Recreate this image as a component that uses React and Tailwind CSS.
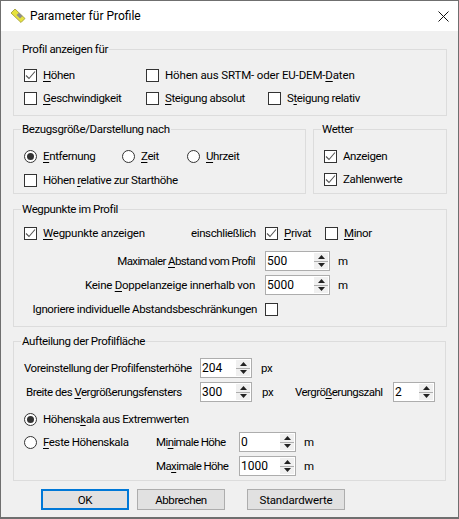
const Key = ({ children }) => <u className="underline underline-offset-2">{children}</u>;

const Check = ({ on, label, className = '' }) => (
  <div className={`flex items-center gap-[6px] ${className}`}>
    <span className="w-[13px] h-[13px] shrink-0 border border-[#333] bg-[#fff] flex items-center justify-center">
      {on && (
        <svg width="11" height="11" viewBox="0 0 11 11" fill="none" stroke="#555" strokeWidth="1.1">
          <path d="M1 5.5 L4 8.5 L10 1.5" />
        </svg>
      )}
    </span>
    {label && <span className="whitespace-nowrap">{label}</span>}
  </div>
);

const Radio = ({ on, label, className = '' }) => (
  <div className={`flex items-center gap-[6px] ${className}`}>
    <span className="w-[13px] h-[13px] shrink-0 rounded-full border border-[#333] bg-[#fff] flex items-center justify-center">
      {on && <span className="w-[7px] h-[7px] rounded-full bg-[#333]" />}
    </span>
    <span className="whitespace-nowrap">{label}</span>
  </div>
);

const Spin = ({ value, className = 'w-[65px]' }) => (
  <div className={`h-[20px] shrink-0 border border-[#adadad] bg-[#fff] flex ${className}`}>
    <span className="flex-1 pl-[1px] text-[12px] tracking-normal leading-[18px] text-[#000]">{value}</span>
    <span className="w-[14px] my-[1px] mr-[1px] flex flex-col gap-[1px] bg-[#adadad]">
      <span className="flex-1 bg-[#f0f0f0] flex items-center justify-center">
        <svg width="7" height="4" viewBox="0 0 7 4"><path d="M3.5 0 L7 4 L0 4 Z" fill="#222" /></svg>
      </span>
      <span className="flex-1 bg-[#f0f0f0] flex items-center justify-center">
        <svg width="7" height="4" viewBox="0 0 7 4"><path d="M0 0 L7 0 L3.5 4 Z" fill="#222" /></svg>
      </span>
    </span>
  </div>
);

const Group = ({ title, className = '', children }) => (
  <fieldset className={`border border-[#dcdcdc] pl-[10px] min-w-0 ${className}`}>
    <legend className="-ml-[3px] px-[1px] leading-[16px] -mb-[1px]">{title}</legend>
    {children}
  </fieldset>
);

const Btn = ({ children, primary, className = '' }) => (
  <div
    className={`h-[21px] flex items-center justify-center bg-[#e1e1e1] ${
      primary ? 'border-2 border-[#0078d7]' : 'border border-[#adadad]'
    } ${className}`}
  >
    {children}
  </div>
);

export default function App() {
  return (
    <div
      className="w-[459px] h-[519px] bg-[#f0f0f0] border-x border-t border-[#6f6f6f] border-b-2 flex flex-col text-[11.5px] tracking-[-0.38px] leading-[16px] text-[#000] overflow-hidden"
      style={{ fontFamily: 'Roboto, "Noto Sans", sans-serif' }}
    >
      <div className="h-[30px] shrink-0 bg-[#fff] flex items-center pl-[9px] pr-[9px]">
        <svg width="16" height="16" viewBox="0 0 16 16" className="mr-[4px]">
          <path d="M1 5 L5 1 L15 10.5 L11 14.5 Z" fill="#e6e23f" stroke="#9a9630" strokeWidth="0.8" />
          <path d="M6.5 7 L9 4.8 L12.5 8 L10 10.5 Z" fill="#8e8e8e" />
        </svg>
        <span className="text-[12px] tracking-normal text-[#000] flex-1">Parameter für Profile</span>
        <svg width="11" height="11" viewBox="0 0 11 11" stroke="#111" strokeWidth="1" fill="none">
          <path d="M0.5 0.5 L10.5 10.5 M10.5 0.5 L0.5 10.5" />
        </svg>
      </div>

      <div className="flex-1 flex flex-col pl-[12px] pr-[11px] pt-[10px]">
        <Group title="Profil anzeigen für" className="h-[75px]">
          <div className="flex flex-col gap-[7px] pt-[11px]">
            <div className="flex">
              <Check on className="w-[122px]" label={<><Key>H</Key>öhen</>} />
              <Check className="tracking-[-0.15px]" label={<>Höhen aus SRTM- oder EU-DEM-<Key>D</Key>aten</>} />
            </div>
            <div className="flex">
              <Check className="w-[122px]" label={<><Key>G</Key>eschwindigkeit</>} />
              <Check className="w-[122px]" label={<><Key>S</Key>teigung absolut</>} />
              <Check label={<>S<Key>t</Key>eigung relativ</>} />
            </div>
          </div>
        </Group>

        <div className="flex gap-[7px] mt-[5px]">
          <Group title="Bezugsgröße/Darstellung nach" className="w-[293px] h-[73px]">
            <div className="flex pt-[12px]">
              <Radio on className="w-[98px]" label={<><Key>E</Key>ntfernung</>} />
              <Radio className="w-[65px]" label={<><Key>Z</Key>eit</>} />
              <Radio label={<><Key>U</Key>hrzeit</>} />
            </div>
            <Check className="mt-[8px]" label={<>Höhen <Key>r</Key>elative zur Starthöhe</>} />
          </Group>
          <Group title="Wetter" className="flex-1 h-[73px]">
            <div className="flex flex-col gap-[7px] pt-[12px]">
              <Check on label="Anzeigen" />
              <Check on label="Zahlenwerte" />
            </div>
          </Group>
        </div>

        <Group title="Wegpunkte im Profil" className="h-[126px] mt-[7px]">
          <div className="flex items-center pt-[9px]">
            <Check on className="w-[167px] tracking-[-0.25px]" label={<><Key>W</Key>egpunkte anzeigen</>} />
            <span className="w-[74px]">einschließlich</span>
            <Check on className="w-[60px]" label={<><Key>P</Key>rivat</>} />
            <Check label={<><Key>M</Key>inor</>} />
          </div>
          <div className="flex items-center mt-[10px]">
            <span className="w-[231px] text-right whitespace-nowrap tracking-[-0.6px]">Maximaler <Key>A</Key>bstand vom Profil</span>
            <Spin value="500" className="w-[65px] ml-[10px]" />
            <span className="ml-[8px]">m</span>
          </div>
          <div className="flex items-center mt-[4px]">
            <span className="w-[231px] text-right whitespace-nowrap tracking-[-0.25px]">Keine <Key>D</Key>oppelanzeige innerhalb von</span>
            <Spin value="5000" className="w-[65px] ml-[10px]" />
            <span className="ml-[8px]">m</span>
          </div>
          <div className="flex items-center mt-[6px]">
            <span className="w-[233px] text-right whitespace-nowrap">Ignoriere individuelle Abstandsbeschränkungen</span>
            <Check className="ml-[8px]" />
          </div>
        </Group>

        <Group title="Aufteilung der Profilfläche" className="h-[148px] mt-[6px] mr-[1px]">
          <div className="flex items-center pt-[10px]">
            <span className="w-[176px] whitespace-nowrap tracking-[-0.45px]">Voreinstellung der Profilfensterhöhe</span>
            <Spin value="204" className="w-[52px]" />
            <span className="ml-[9px]">px</span>
          </div>
          <div className="flex items-center mt-[4px]">
            <span className="w-[176px] pl-[2px] whitespace-nowrap tracking-[-0.5px]">Breite des <Key>V</Key>ergrößerungsfensters</span>
            <Spin value="300" className="w-[52px]" />
            <span className="ml-[10px] w-[33px]">px</span>
            <span className="w-[98px] whitespace-nowrap tracking-[-0.55px]">Vergrö<Key>ß</Key>erungszahl</span>
            <Spin value="2" className="w-[42px]" />
          </div>
          <Radio on className="mt-[9px]" label={<>Höhens<Key>k</Key>ala aus Extremwerten</>} />
          <div className="flex items-center mt-[5px]">
            <Radio className="w-[132px]" label={<><Key>F</Key>este Höhenskala</>} />
            <span className="w-[83px] whitespace-nowrap tracking-[-0.6px]">Mi<Key>n</Key>imale Höhe</span>
            <Spin value="0" className="w-[57px]" />
            <span className="ml-[8px]">m</span>
          </div>
          <div className="flex items-center mt-[4px]">
            <span className="w-[215px] pl-[132px] box-border whitespace-nowrap tracking-[-0.6px]">Ma<Key>x</Key>imale Höhe</span>
            <Spin value="1000" className="w-[57px]" />
            <span className="ml-[8px]">m</span>
          </div>
        </Group>

        <div className="flex mt-[8px] pl-[28px]">
          <Btn primary className="w-[88px]">OK</Btn>
          <Btn className="w-[88px] ml-[8px]">Abbrechen</Btn>
          <Btn className="w-[98px] ml-[22px] tracking-[-0.15px]">Standardwerte</Btn>
        </div>
      </div>
    </div>
  );
}
